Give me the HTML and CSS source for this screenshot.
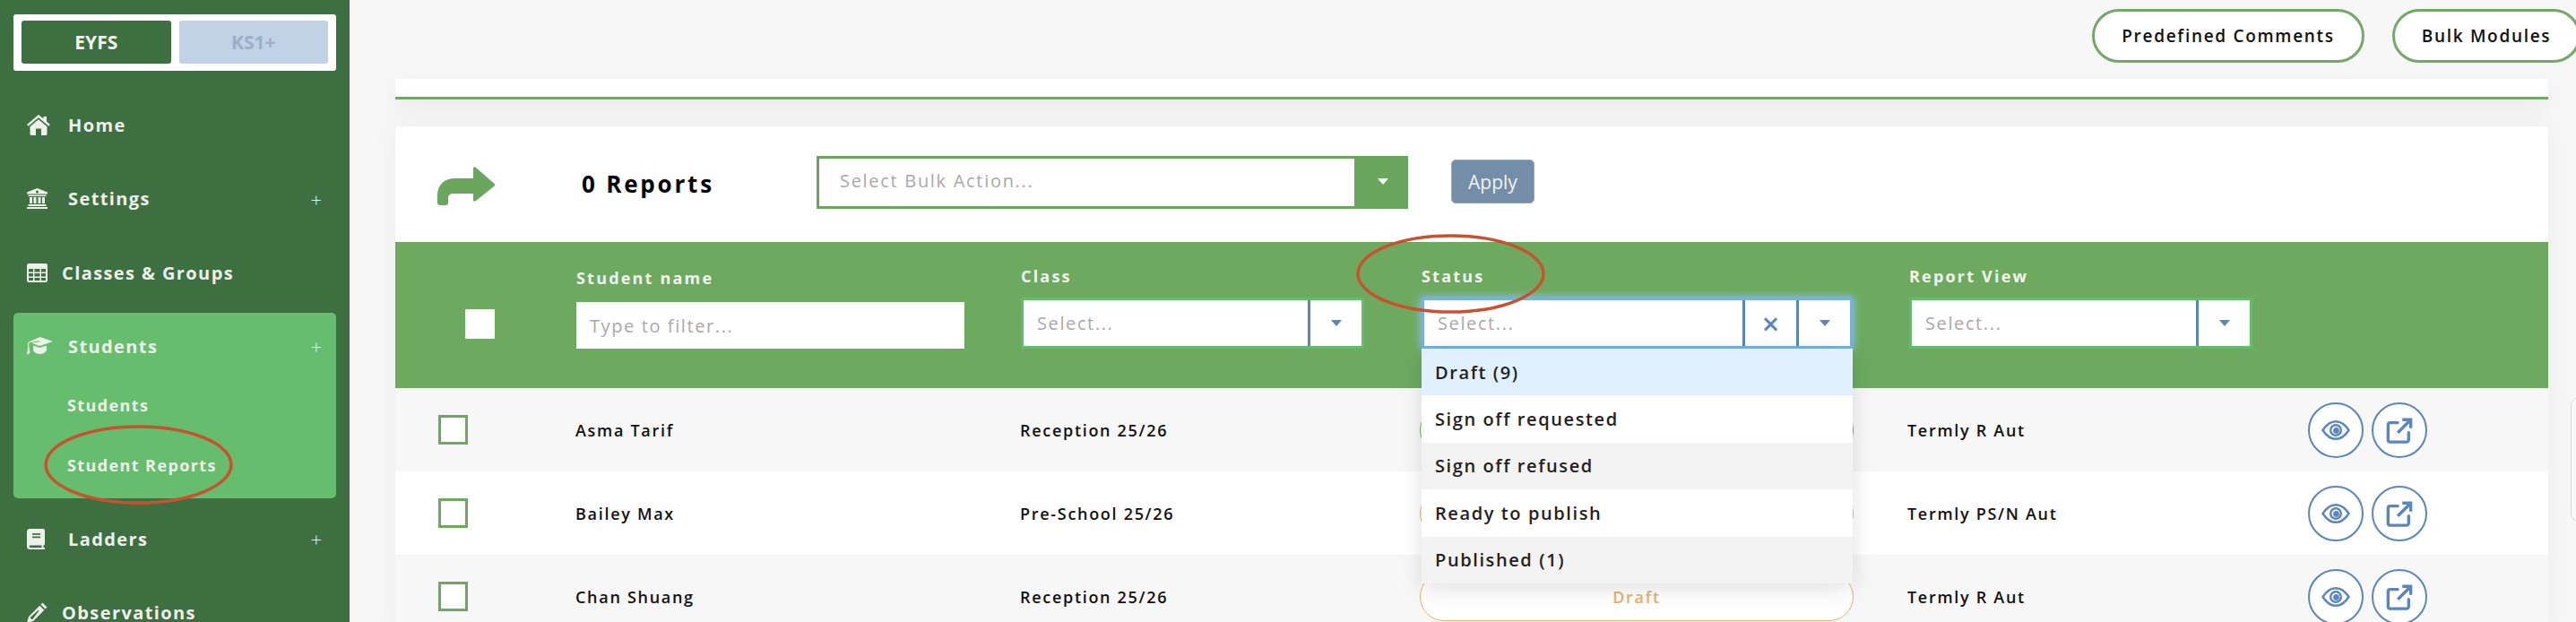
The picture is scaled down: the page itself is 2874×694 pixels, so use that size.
FILE: index.html
```html
<!DOCTYPE html>
<html lang="en">
<head>
<meta charset="utf-8">
<title>Student Reports</title>
<link rel="stylesheet" href="styles.css">
</head>
<body>
<svg class="defs" width="0" height="0" aria-hidden="true">
  <symbol id="eye" viewBox="0 0 62 62">
    <path d="M15.500 31C21 22.500 26 20.500 31 20.500S41 22.500 46.500 31C41 39.500 36 41.500 31 41.500S21 39.500 15.500 31Z" fill="none" stroke="currentColor" stroke-width="2.600"/>
    <circle cx="31" cy="31" r="6.200" fill="none" stroke="currentColor" stroke-width="2.600"/>
    <circle cx="31.500" cy="31.500" r="3.600" fill="currentColor"/>
  </symbol>
  <symbol id="open" viewBox="0 0 62 62">
    <path d="M29 22H20a2.500 2.500 0 0 0-2.500 2.500V42.500A2.500 2.500 0 0 0 20 45H39.500A2.500 2.500 0 0 0 42 42.500V34" fill="none" stroke="currentColor" stroke-width="3.600" stroke-linecap="round"/>
    <path d="M29 34L43 20M34.500 18.500H44.500V28.500" fill="none" stroke="currentColor" stroke-width="3.600"/>
  </symbol>
</svg>

<aside class="sidebar">
  <div class="phase">
    <div class="phase-btn phase-on">EYFS</div>
    <div class="phase-btn phase-off">KS1+</div>
  </div>
  <nav class="nav">
    <div class="nav-item">
      <span class="ico"><svg width="26" height="23" viewBox="0 0 26 23"><path fill="currentColor" d="M13 0L18.500 4.600V2H22V7.500L26 11 24.400 12.800 13 3.300 1.600 12.800 0 11ZM13 5.300L22.500 13.200V21.500A1.500 1.500 0 0 1 21 23H16V15.500H10V23H5A1.500 1.500 0 0 1 3.500 21.500V13.200Z"/></svg></span>
      <span>Home</span>
    </div>
    <div class="nav-item">
      <span class="ico"><svg width="23" height="23" viewBox="0 0 23 23"><path fill="currentColor" d="M11.500 0L23 4.600V6.500H0V4.600ZM1.500 7.500H21.500V9H1.500ZM3 10H6V17H3ZM7.500 10H10.500V17H7.500ZM12.500 10H15.500V17H12.500ZM17 10H20V17H17ZM1.500 18H21.500V20H1.500ZM0 21H23V23H0Z"/><circle cx="11.500" cy="4" r="1.500" fill="#3d6f40"/></svg></span>
      <span>Settings</span>
      <span class="plus">+</span>
    </div>
    <div class="nav-item">
      <span class="ico ico-narrow"><svg width="23" height="21" viewBox="0 0 23 21"><path fill="currentColor" fill-rule="evenodd" d="M2 0H21A2 2 0 0 1 23 2V19A2 2 0 0 1 21 21H2A2 2 0 0 1 0 19V2A2 2 0 0 1 2 0ZM2 6V9.500H7V6ZM8.500 6V9.500H14.500V6ZM16 6V9.500H21V6ZM2 11V14.500H7V11ZM8.500 11V14.500H14.500V11ZM16 11V14.500H21V11ZM2 16V19H7V16ZM8.500 16V19H14.500V16ZM16 16V19H21V16Z"/></svg></span>
      <span>Classes &amp; Groups</span>
    </div>
    <div class="nav-group">
      <div class="nav-item nav-head">
        <span class="ico"><svg width="29" height="20" viewBox="0 0 29 20"><path fill="currentColor" d="M14.500 0L29 5 14.500 10 5 6.700 14.200 5.200 14 4.300 3.400 6.100A1.800 1.800 0 0 0 2.300 7.700V10.800L3.500 17.500 0 20 1.200 10.800V7.300C1.300 6.200 1.800 5.700 2.800 5.200ZM7 9.500L14.500 12 22 9.500V15C20 18 17 19 14.500 19S9 18 7 15Z"/></svg></span>
        <span>Students</span>
        <span class="plus">+</span>
      </div>
      <div class="nav-sub">Students</div>
      <div class="nav-sub nav-sub-last">Student Reports</div>
    </div>
    <div class="nav-item nav-after">
      <span class="ico"><svg width="20" height="23" viewBox="0 0 20 23"><path fill="currentColor" fill-rule="evenodd" d="M3.500 0H18.500A1.500 1.500 0 0 1 20 1.500V17.500L18.500 18.500V21H20V23H3.500A3.500 3.500 0 0 1 0 19.500V3.500A3.500 3.500 0 0 1 3.500 0ZM6 5V6.800H15V5ZM6 8.500V10.300H15V8.500ZM3.500 18.500A1.300 1.300 0 0 0 3.500 21H16.500V18.500Z"/></svg></span>
      <span>Ladders</span>
      <span class="plus">+</span>
    </div>
    <div class="nav-item">
      <span class="ico ico-narrow"><svg width="23" height="23" viewBox="0 0 23 23"><path fill="currentColor" d="M17.500 0.500L22.500 5.500 20.500 7.500 15.500 2.500ZM14.300 3.700L19.300 8.700 7 21 0 23 2 16ZM3.500 17L6 19.500 13.500 9.500 12.800 8.800Z"/></svg></span>
      <span>Observations</span>
    </div>
  </nav>
</aside>

<main class="main">
  <div class="topbar">
    <div class="pill-btn pill-predefined">Predefined Comments</div>
    <div class="pill-btn pill-bulk">Bulk Modules</div>
  </div>
  <div class="strip"></div>
  <section class="card">
    <div class="bulkbar">
      <svg class="bulk-arrow" width="64" height="43" viewBox="0 0 64 43"><path fill="#6ba65f" d="M40 2C40 0 42 0 43 1L63 18.500C64.500 19.700 64.500 20.800 63 22L43 38C42 39 40 39 40 37V30H18C14 30 12 32 12 35V40C12 42 11 43 9 43H3C1 43 0 42 0 40V32C0 20 8 13 20 13H40Z"/></svg>
      <div class="report-count">0 Reports</div>
      <div class="bulk-select">
        <div class="bulk-value">Select Bulk Action...</div>
        <div class="bulk-caret"><i class="caret caret-white"></i></div>
      </div>
      <div class="apply">Apply</div>
    </div>

    <div class="filters">
      <div class="head-check"></div>
      <div class="filter filter-name">
        <div class="filter-label">Student name</div>
        <div class="text-filter">Type to filter...</div>
      </div>
      <div class="filter">
        <div class="filter-label">Class</div>
        <div class="select">
          <div class="select-value">Select...</div>
          <div class="select-cell"><i class="caret"></i></div>
        </div>
      </div>
      <div class="filter">
        <div class="filter-label">Status</div>
        <div class="select select-open">
          <div class="select-value">Select...</div>
          <div class="select-cell select-clear">×</div>
          <div class="select-cell"><i class="caret"></i></div>
          <ul class="menu">
            <li class="menu-item menu-focus">Draft (9)</li>
            <li class="menu-item">Sign off requested</li>
            <li class="menu-item menu-alt">Sign off refused</li>
            <li class="menu-item">Ready to publish</li>
            <li class="menu-item menu-alt">Published (1)</li>
          </ul>
        </div>
      </div>
      <div class="filter">
        <div class="filter-label">Report View</div>
        <div class="select">
          <div class="select-value">Select...</div>
          <div class="select-cell"><i class="caret"></i></div>
        </div>
      </div>
    </div>

    <div class="row row-alt">
      <div class="check"></div>
      <div>Asma Tarif</div>
      <div>Reception 25/26</div>
      <div class="status status-green"></div>
      <div>Termly R Aut</div>
      <div class="actions">
        <span class="round"><svg width="58" height="58"><use href="#eye"/></svg></span>
        <span class="round"><svg width="58" height="58"><use href="#open"/></svg></span>
      </div>
    </div>
    <div class="row">
      <div class="check"></div>
      <div>Bailey Max</div>
      <div>Pre-School 25/26</div>
      <div class="status status-orange"></div>
      <div>Termly PS/N Aut</div>
      <div class="actions">
        <span class="round"><svg width="58" height="58"><use href="#eye"/></svg></span>
        <span class="round"><svg width="58" height="58"><use href="#open"/></svg></span>
      </div>
    </div>
    <div class="row row-alt">
      <div class="check"></div>
      <div>Chan Shuang</div>
      <div>Reception 25/26</div>
      <div class="status status-orange">Draft</div>
      <div>Termly R Aut</div>
      <div class="actions">
        <span class="round"><svg width="58" height="58"><use href="#eye"/></svg></span>
        <span class="round"><svg width="58" height="58"><use href="#open"/></svg></span>
      </div>
    </div>
  </section>
</main>

<div class="side-tab"></div>
<svg class="ring ring-reports" width="211" height="89" viewBox="0 0 211 89"><ellipse cx="105.500" cy="44.500" rx="103.500" ry="42.500"/></svg>
<svg class="ring ring-status" width="211" height="89" viewBox="0 0 211 89"><ellipse cx="105.500" cy="44.500" rx="103.500" ry="42.500"/></svg>
</body>
</html>
```
FILE: styles.css
```css
* { box-sizing: border-box; }
html, body { margin: 0; height: 694px; overflow: hidden; }
body {
  display: flex;
  position: relative;
  background: #f7f7f7;
  font-family: "Open Sans", "Liberation Sans", sans-serif;
  color: #111;
}
.defs { position: absolute; }

/* sidebar */
.sidebar {
  flex: 0 0 390px;
  height: 694px;
  overflow: hidden;
  padding: 16px 15px 0;
  background: #3d6f40;
}
.phase {
  display: flex;
  gap: 9px;
  height: 63px;
  padding: 7px 9px 8px;
  background: #fff;
  border-radius: 3px;
}
.phase-btn {
  flex: 1;
  display: flex;
  align-items: center;
  justify-content: center;
  border-radius: 3px;
  font-size: 21px;
  font-weight: 700;
}
.phase-on { background: #3d6f40; color: #f2f2ee; }
.phase-off { background: #c1d1e6; color: #9eaec6; }
.nav { margin-top: 19px; }
.nav-item {
  display: flex;
  align-items: center;
  height: 82.500px;
  padding: 0 16px 0 15px;
  color: #eef0ea;
  font-size: 20px;
  font-weight: 700;
  letter-spacing: 1.400px;
}
.ico { flex: 0 0 46px; display: flex; align-items: center; }
.ico-narrow { flex-basis: 39px; }
.plus { margin-left: auto; font-size: 22px; font-weight: 300; letter-spacing: 0; }
.nav-group {
  margin-top: 3.500px;
  height: 207px;
  background: #65bd6d;
  border-radius: 5px;
}
.nav-head { height: 74px; }
.nav-sub {
  display: flex;
  align-items: center;
  height: 58px;
  padding-left: 60px;
  color: #eef0ea;
  font-size: 18px;
  font-weight: 700;
  letter-spacing: 1.400px;
}
.nav-sub-last { height: 75px; }
.nav-after { margin-top: 4px; }

/* main */
.main { flex: 1; min-width: 0; height: 694px; padding: 0 31px 0 51px; }
.topbar {
  display: flex;
  justify-content: flex-end;
  gap: 31px;
  height: 88px;
  padding-top: 10px;
  margin-right: -36px;
}
.pill-btn {
  display: flex;
  align-items: center;
  justify-content: center;
  height: 60px;
  background: #fff;
  border: 3px solid #73a868;
  border-radius: 30px;
  font-size: 19px;
  font-weight: 600;
  letter-spacing: 1.700px;
  white-space: nowrap;
}
.pill-predefined { width: 304px; }
.pill-bulk { width: 210px; }
.strip {
  height: 23px;
  background: #fff;
  border-bottom: 3px solid #73a868;
  box-shadow: 0 8px 24px rgba(0, 0, 0, .06);
}
.card {
  margin-top: 30px;
  background: #fff;
  border-radius: 4px 4px 0 0;
  box-shadow: 0 0 30px rgba(0, 0, 0, .05);
}

/* bulk bar */
.bulkbar {
  display: flex;
  align-items: flex-start;
  height: 129px;
  padding: 33px 0 0 47px;
}
.bulk-arrow { flex: 0 0 64px; margin: 12px 97px 0 0; }
.report-count {
  flex: 0 0 262px;
  margin-top: 11px;
  color: #000;
  font-size: 26px;
  line-height: 40px;
  font-weight: 700;
  letter-spacing: 2.800px;
}
.bulk-select {
  flex: 0 0 660px;
  display: flex;
  height: 59px;
  border: 3px solid #6ba65f;
  background: #fff;
}
.bulk-value {
  flex: 1;
  padding: 0 0 4px 23px;
  display: flex;
  align-items: center;
  color: #a9a9a9;
  font-size: 20px;
  letter-spacing: 1.700px;
}
.bulk-caret {
  flex: 0 0 57px;
  padding: 0 0 3px 7px;
  display: flex;
  align-items: center;
  justify-content: center;
  background: #6ba65f;
}
.apply {
  width: 93px;
  height: 49px;
  margin: 4px 0 0 48px;
  display: flex;
  align-items: center;
  justify-content: center;
  background: #748ea8;
  border: 1px solid #92a8bc;
  border-radius: 5px;
  color: #eef2f6;
  font-size: 21px;
}

/* filter header */
.filters {
  display: grid;
  grid-template-columns: 124px 496px 447px 544px 383px;
  align-items: start;
  height: 163px;
  padding-left: 78px;
  background: #6daa5f;
}
.head-check { width: 33px; height: 33px; margin-top: 75px; background: #fff; }
.filter { padding-top: 26px; }
.filter-label {
  height: 24px;
  margin-bottom: 12px;
  color: #f3f6ef;
  font-size: 18px;
  line-height: 24px;
  font-weight: 700;
  letter-spacing: 2.200px;
}
.filter-name { padding-top: 28px; }
.filter-name .filter-label { margin-bottom: 15px; }
.text-filter {
  width: 433px;
  height: 52px;
  padding-left: 15px;
  display: flex;
  align-items: center;
  background: #fff;
  color: #a9a9a9;
  font-size: 20px;
  letter-spacing: 1.600px;
}
.select {
  position: relative;
  display: flex;
  width: 383px;
  height: 57px;
  background: #fff;
  border: 3px solid #66bb6a;
}
.select-value {
  flex: 1;
  padding-left: 15px;
  display: flex;
  align-items: center;
  color: #a9a9a9;
  font-size: 20px;
  letter-spacing: 1.600px;
}
.select-cell {
  flex: 0 0 60px;
  display: flex;
  align-items: center;
  justify-content: center;
  border-left: 3px solid #5b85bd;
  color: #5b85bd;
}
.select-clear { font-size: 34px; font-weight: 600; line-height: 1; }
.select-open {
  z-index: 3;
  width: 481px;
  border-color: #78b0df;
  box-shadow: 0 0 9px 1px #8fc0ea;
}
.caret {
  width: 0;
  height: 0;
  border-left: 6.500px solid transparent;
  border-right: 6.500px solid transparent;
  border-top: 7px solid #5b85bd;
}
.caret-white { border-top-color: #fff; }
.menu {
  position: absolute;
  top: 54px;
  left: -3px;
  width: 481px;
  margin: 0;
  padding: 0;
  list-style: none;
  background: #fff;
  box-shadow: 0 6px 24px rgba(0, 0, 0, .12);
}
.menu-item {
  height: 52.400px;
  padding-left: 15px;
  display: flex;
  align-items: center;
  color: #222;
  font-size: 20px;
  font-weight: 600;
  letter-spacing: 1.600px;
}
.menu-focus { background: #e0f0ff; }
.menu-alt { background: #f3f3f3; }

/* rows */
.row {
  display: grid;
  grid-template-columns: 153px 496px 446px 544px 447px 1fr;
  align-items: center;
  height: 93px;
  padding-left: 48px;
  background: #fff;
  font-size: 18px;
  font-weight: 600;
  letter-spacing: 1.700px;
}
.row-alt { background: #f7f7f7; }
.check {
  width: 33px;
  height: 33px;
  background: #fff;
  border: 3px solid #6daa5f;
}
.status {
  width: 484px;
  height: 54px;
  display: flex;
  align-items: center;
  justify-content: center;
  background: #fff;
  border: 1px solid;
  border-radius: 27px;
}
.status-orange { border-color: #e6b36c; color: #e6b36c; }
.status-green { border-color: #6daa5f; color: #6daa5f; }
.actions { display: flex; gap: 9px; }
.round {
  width: 62px;
  height: 62px;
  display: flex;
  align-items: center;
  justify-content: center;
  background: #fff;
  border: 2px solid #5b85bd;
  border-radius: 50%;
  color: #5b85bd;
}

/* overlays */
.side-tab {
  position: absolute;
  top: 443px;
  right: -12px;
  width: 18px;
  height: 139px;
  background: #f9f9f9;
  border: 1px solid #d9d9d9;
  border-radius: 12px;
}
.ring { position: absolute; z-index: 5; pointer-events: none; }
.ring ellipse { fill: none; stroke: #c9512f; stroke-width: 3.500; }
.ring-reports { left: 49px; top: 474px; }
.ring-status { left: 1513px; top: 261px; }
```
